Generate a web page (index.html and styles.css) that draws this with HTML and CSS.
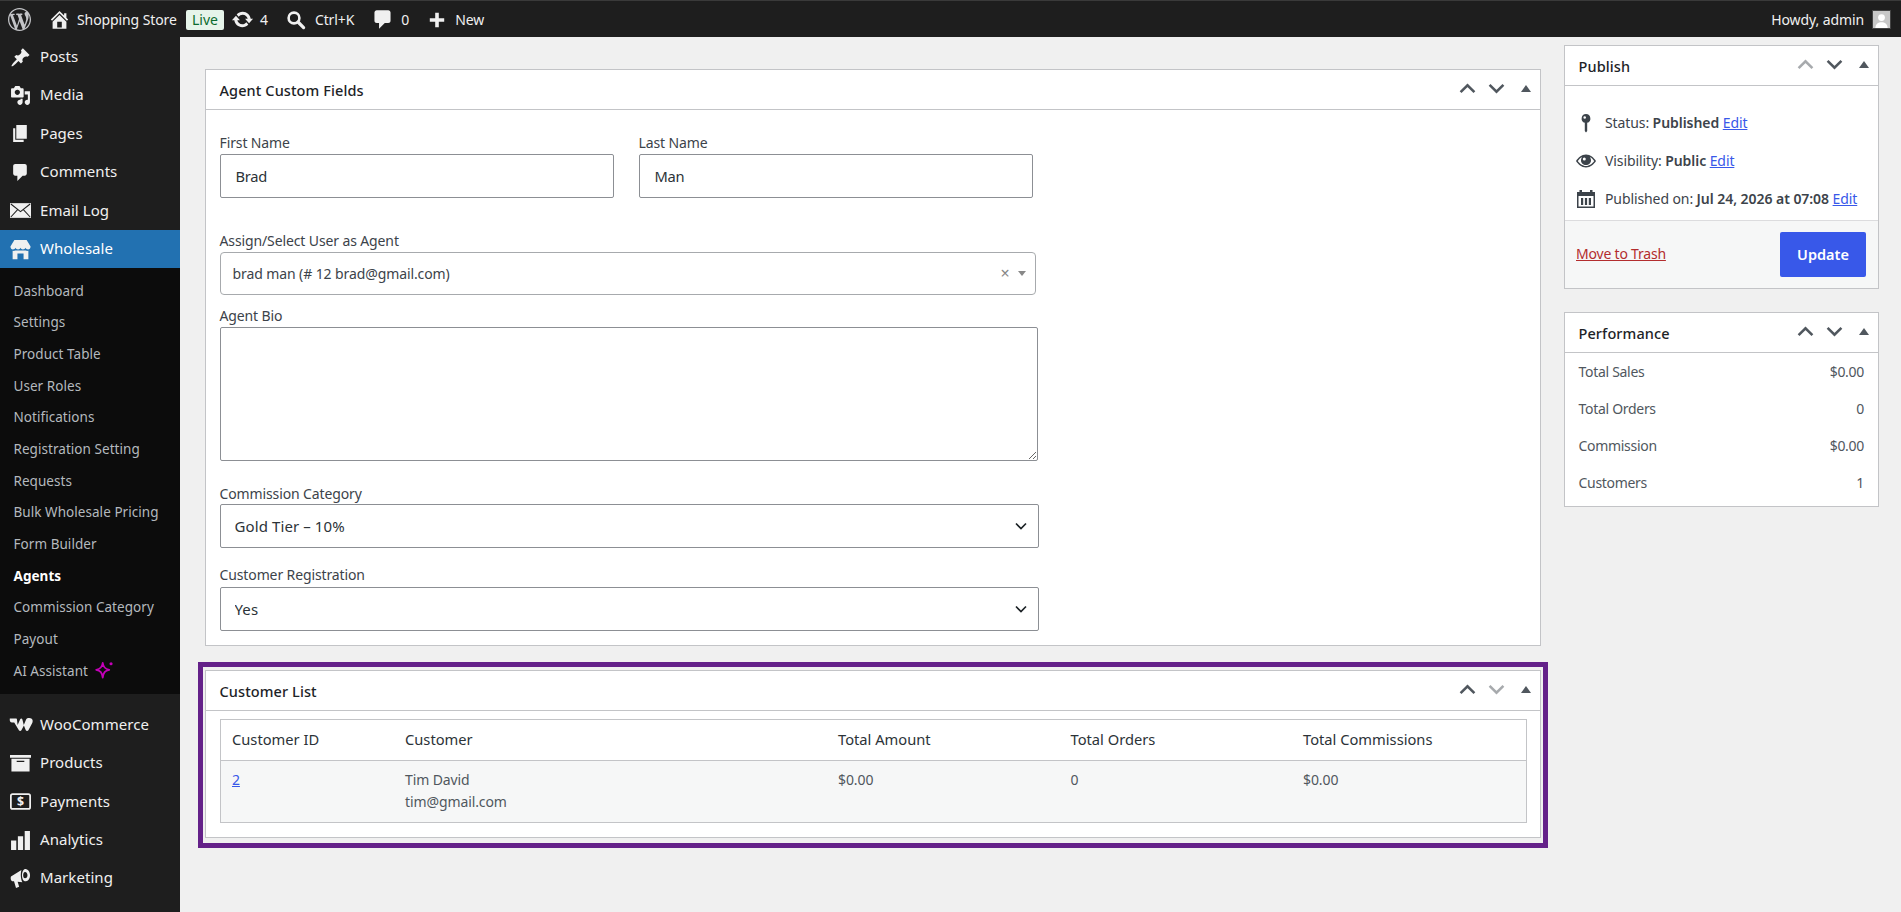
FILE: index.html
```html
<!DOCTYPE html>
<html lang="en">
<head>
    <meta charset="UTF-8">
    <title>Edit Agent - Shopping Store</title>
    <link rel="stylesheet" href="styles.css">
</head>
<body>

<!-- Admin bar -->
<header class="adminbar">
    <svg class="bar-logo" viewBox="0 0 20 20"><path d="M20 10c0-5.51-4.49-10-10-10C4.48 0 0 4.49 0 10c0 5.52 4.48 10 10 10 5.51 0 10-4.48 10-10zM7.78 15.37L4.37 6.22c.55-.02 1.17-.08 1.17-.08.5-.06.44-1.13-.06-1.11 0 0-1.45.11-2.37.11-.18 0-.37 0-.58-.01C4.12 2.69 6.87 1.11 10 1.11c2.33 0 4.45.87 6.05 2.34-.68-.11-1.65.39-1.65 1.58 0 .74.45 1.36.9 2.1.35.61.55 1.36.55 2.46 0 1.49-1.4 5-1.4 5l-3.03-8.37c.54-.02.82-.17.82-.17.5-.05.44-1.25-.06-1.22 0 0-1.44.12-2.38.12-.87 0-2.33-.12-2.33-.12-.5-.03-.56 1.2-.06 1.22l.92.08 1.26 3.41zM17.41 10c.24-.64.74-1.87.43-4.25.7 1.29 1.05 2.71 1.05 4.25 0 3.29-1.73 6.24-4.4 7.78.97-2.59 1.94-5.2 2.92-7.78zM6.1 18.09C3.12 16.65 1.11 13.53 1.11 10c0-1.3.23-2.48.72-3.59C3.25 10.3 4.67 14.2 6.1 18.09zm4.03-6.63l2.58 6.98c-.86.29-1.76.45-2.71.45-.79 0-1.57-.11-2.29-.33.81-2.38 1.62-4.74 2.42-7.1z"/></svg>
    <svg class="bar-icon bar-home" viewBox="0 0 20 20"><path d="M16 8.5l1.53 1.53-1.06 1.06L10 4.62l-6.47 6.47-1.06-1.06L10 2.5l4 4v-2h2v4zm-6-2.46l6 5.99V18H4v-5.97zM12 17v-5H8v5h4z"/></svg>
    <span class="bar-text bar-site">Shopping Store</span>
    <span class="live-badge">Live</span>
    <svg class="bar-icon bar-update" viewBox="0 0 20 20"><path d="M10.2 3.28c3.53 0 6.43 2.61 6.92 6h2.08l-3.5 4-3.5-4h2.32c-.45-1.97-2.21-3.45-4.32-3.45-1.45 0-2.73.71-3.54 1.78L4.95 5.66C6.23 4.2 8.11 3.28 10.2 3.28zm-.4 13.44c-3.52 0-6.43-2.61-6.92-6H.8l3.5-4c1.17 1.33 2.33 2.67 3.5 4H5.48c.45 1.97 2.21 3.45 4.32 3.45 1.45 0 2.73-.71 3.54-1.78l1.71 1.95c-1.28 1.46-3.15 2.38-5.25 2.38z"/></svg>
    <span class="bar-text bar-count">4</span>
    <svg class="bar-icon bar-search" viewBox="0 0 20 20"><circle cx="8" cy="8" r="5.4" fill="none" stroke="currentColor" stroke-width="2.6"/><path d="M12 12l5.6 5.6" fill="none" stroke="currentColor" stroke-width="3.2" stroke-linecap="round"/></svg>
    <span class="bar-text bar-shortcut">Ctrl+K</span>
    <svg class="bar-icon bar-comment" viewBox="0 0 20 20"><path d="M5 2h10c1.1 0 2 .9 2 2v7c0 1.1-.9 2-2 2h-3l-5 5v-5H5c-1.1 0-2-.9-2-2V4c0-1.1.9-2 2-2z"/></svg>
    <span class="bar-text bar-count-zero">0</span>
    <svg class="bar-icon bar-plus" viewBox="0 0 20 20"><path d="M8 2h4v6h6v4h-6v6H8v-6H2V8h6z"/></svg>
    <span class="bar-text bar-new">New</span>
    <span class="bar-text bar-howdy">Howdy, admin</span>
    <span class="bar-avatar"><svg viewBox="0 0 18 18"><rect width="18" height="18" fill="#c8c8c8"/><circle cx="9" cy="7" r="3.6" fill="#fff"/><path d="M2.5 18c.4-4.5 3-6 6.5-6s6.1 1.5 6.500 6z" fill="#fff"/></svg></span>
</header>

<div class="layout">
    <!-- Side menu -->
    <nav class="sidemenu">
        <a class="menu-item"><svg viewBox="0 0 20 20"><path d="M10.44 3.02l1.82-1.82 6.36 6.35-1.83 1.82c-1.05-.68-2.48-.57-3.41.36l-.75.75c-.92.93-1.04 2.35-.35 3.41l-1.83 1.82-2.41-2.41-2.8 2.79c-.42.42-3.38 2.71-3.8 2.29s1.86-3.39 2.28-3.81l2.79-2.79L4.1 9.36l1.83-1.82c1.05.69 2.48.57 3.4-.36l.75-.75c.93-.92 1.05-2.35.36-3.41z"/></svg>Posts</a>
        <a class="menu-item"><svg viewBox="0 0 20 20"><path d="M13 11V4c0-.55-.45-1-1-1h-1.67L9 1H5L3.67 3H2c-.55 0-1 .45-1 1v7c0 .55.45 1 1 1h10c.55 0 1-.45 1-1zM7 4.5c1.38 0 2.5 1.12 2.5 2.5S8.38 9.5 7 9.5 4.5 8.38 4.5 7 5.62 4.5 7 4.5zM14 6h5v10.5c0 1.38-1.12 2.5-2.5 2.5S14 17.88 14 16.5s1.12-2.5 2.5-2.5c.17 0 .34.02.5.05V9h-3V6zm-4 8.05V13h2v3.5c0 1.38-1.12 2.5-2.5 2.5S7 17.88 7 16.5 8.12 14 9.5 14c.17 0 .34.02.5.05z"/></svg>Media</a>
        <a class="menu-item"><svg viewBox="0 0 20 20"><path d="M6 15V2h10v13H6zm-1 1h8v2H3V5h2v11z"/></svg>Pages</a>
        <a class="menu-item"><svg viewBox="0 0 20 20"><path d="M5 2h9c1.1 0 2 .9 2 2v7c0 1.1-.9 2-2 2h-2l-5 5v-5H5c-1.1 0-2-.9-2-2V4c0-1.1.9-2 2-2z"/></svg>Comments</a>
        <a class="menu-item"><svg viewBox="0 0 20 20"><rect y="3" width="20" height="14"/><path class="mail-lines" d="M.8 3.8L10 11l9.2-7.2M.8 16.2L7.5 9M19.2 16.2L12.5 9"/></svg>Email Log</a>
        <a class="menu-item menu-current"><svg viewBox="0 0 24 24"><path d="M5 1h14l4.5 7.5c0 2-1.3 3.5-2.9 3.5-1.3 0-2.4-.8-2.9-2-.5 1.2-1.6 2-2.9 2s-2.3-.8-2.8-2c-.5 1.2-1.5 2-2.8 2s-2.4-.8-2.9-2c-.5 1.2-1.6 2-2.9 2C1.8 12 .5 10.5.5 8.5z"/><path d="M3 13.5c1 .3 2.2.2 3-.3h12c.8.5 2 .6 3 .3V23h-5.5v-6.5h-7V23H3z"/></svg>Wholesale</a>
        <div class="submenu">
            <a class="sub-item">Dashboard</a>
            <a class="sub-item">Settings</a>
            <a class="sub-item">Product Table</a>
            <a class="sub-item">User Roles</a>
            <a class="sub-item">Notifications</a>
            <a class="sub-item">Registration Setting</a>
            <a class="sub-item">Requests</a>
            <a class="sub-item">Bulk Wholesale Pricing</a>
            <a class="sub-item">Form Builder</a>
            <a class="sub-item sub-current">Agents</a>
            <a class="sub-item">Commission Category</a>
            <a class="sub-item">Payout</a>
            <a class="sub-item">AI Assistant <svg class="sparkle" viewBox="0 0 16 16"><path d="M6.5 1.5c.6 3.7 1.8 5.200 5.500 5.900-3.700.7-4.900 2.300-5.500 6.600-.6-4.300-1.800-5.900-5.500-6.600 3.700-.7 4.900-2.200 5.500-5.900z" fill="none" stroke="#c400b8" stroke-width="1.5" stroke-linejoin="round"/><circle cx="13.5" cy="2.3" r="1.3" fill="#c400b8"/></svg></a>
        </div>
        <div class="menu-sep"></div>
        <a class="menu-item"><svg class="woo-icon" viewBox="0 0 24 14"><path d="M.8 1h6c.8 0 1.2.5 1.2 1.2l.6 5.300 2.600-5.700c.4-1 1.800-1 2.100 0l1.500 5.700 2.300-5.500C17.700.8 18.800.4 20.200.4c2 0 3.500 1.200 3.500 3 0 1.100-.5 2.200-1.100 3.300l-3.200 6c-.6 1-2.100 1-2.600 0l-1.900-4.800-2.500 4.800c-.5 1-2 1-2.500 0L5.200 5H3C1.400 5 .4 3.400.8 1z"/></svg>WooCommerce</a>
        <a class="menu-item"><svg viewBox="0 0 22 18"><path fill-rule="evenodd" d="M0 0h22v3H0zM1.500 4h19v13.500h-19zM7 6v1.400h8V6z"/></svg>Products</a>
        <a class="menu-item"><svg viewBox="0 0 24 20"><rect x="1" y="1.5" width="22" height="17" rx="2" fill="none" stroke="currentColor" stroke-width="2"/><text x="12" y="15" text-anchor="middle" class="pay-sign">$</text></svg>Payments</a>
        <a class="menu-item"><svg viewBox="0 0 20 20"><path d="M1 10h5v9H1zM7.5 6h5v13h-5zM14 1h5v18h-5z"/></svg>Analytics</a>
        <a class="menu-item"><svg viewBox="0 0 22 22"><path fill-rule="evenodd" d="M1 9l11-7c-1 3-1 9 1 13l-5-.7 1.600 5.400-3.300 1.300L4.200 14 2.300 14C.8 13.500.3 10.500 1 9zM15.500 1c3.300 0 5.500 2.800 5.500 6.500S18.800 14 15.500 14c-1.500-.5-3-3-3-6.500S14 1.500 15.500 1zM15.800 4.300c-1.400 0-2 1.500-2 3.200s.6 3.200 2 3.200 2.500-1.500 2.500-3.200-1.100-3.200-2.500-3.200z"/></svg>Marketing</a>
    </nav>

    <main class="content">
        <div class="main-col">
            <section class="postbox box-agent">
                <div class="box-head">
                    <h2>Agent Custom Fields</h2>
                    <div class="box-tools">
                        <svg class="chev" viewBox="0 0 16 10"><path d="M1.5 8.5L8 2l6.5 6.5"/></svg>
                        <svg class="chev" viewBox="0 0 16 10"><path d="M1.5 1.5L8 8l6.5-6.5"/></svg>
                        <span class="tri"></span>
                    </div>
                </div>
                <div class="form-body">
                    <div class="name-row">
                        <div class="name-field">
                            <label class="field-label">First Name</label>
                            <input class="text-input" type="text" value="Brad">
                        </div>
                        <div class="name-field">
                            <label class="field-label">Last Name</label>
                            <input class="text-input" type="text" value="Man">
                        </div>
                    </div>
                    <label class="field-label label-assign">Assign/Select User as Agent</label>
                    <div class="select2">
                        <span>brad man (# 12 brad@gmail.com)</span>
                        <span class="select2-clear">×</span>
                        <span class="select2-arrow"></span>
                    </div>
                    <label class="field-label label-bio">Agent Bio</label>
                    <textarea class="bio-input"></textarea>
                    <label class="field-label label-commission">Commission Category</label>
                    <select class="select-input"><option>Gold Tier – 10%</option></select>
                    <label class="field-label label-registration">Customer Registration</label>
                    <select class="select-input"><option>Yes</option></select>
                </div>
            </section>

            <div class="highlight">
                <section class="postbox">
                    <div class="box-head">
                        <h2>Customer List</h2>
                        <div class="box-tools">
                            <svg class="chev" viewBox="0 0 16 10"><path d="M1.5 8.5L8 2l6.5 6.5"/></svg>
                            <svg class="chev chev-off" viewBox="0 0 16 10"><path d="M1.5 1.5L8 8l6.5-6.5"/></svg>
                            <span class="tri"></span>
                        </div>
                    </div>
                    <div class="table-wrap">
                        <table class="customer-table">
                            <thead>
                                <tr>
                                    <th class="col-id">Customer ID</th>
                                    <th class="col-name">Customer</th>
                                    <th class="col-amount">Total Amount</th>
                                    <th class="col-orders">Total Orders</th>
                                    <th>Total Commissions</th>
                                </tr>
                            </thead>
                            <tbody>
                                <tr>
                                    <td><a href="#">2</a></td>
                                    <td>Tim David<br>tim@gmail.com</td>
                                    <td>$0.00</td>
                                    <td>0</td>
                                    <td>$0.00</td>
                                </tr>
                            </tbody>
                        </table>
                    </div>
                </section>
            </div>
        </div>

        <aside class="side-col">
            <section class="postbox">
                <div class="box-head">
                    <h2>Publish</h2>
                    <div class="box-tools">
                        <svg class="chev chev-off" viewBox="0 0 16 10"><path d="M1.5 8.5L8 2l6.5 6.5"/></svg>
                        <svg class="chev" viewBox="0 0 16 10"><path d="M1.5 1.5L8 8l6.5-6.5"/></svg>
                        <span class="tri"></span>
                    </div>
                </div>
                <div class="publish-body">
                    <div class="publish-row">
                        <svg class="pub-icon" viewBox="0 0 20 20"><path fill-rule="evenodd" d="M10 1a4.500 4.500 0 0 1 1.200 8.800V18l-1.200 1.500L8.800 18V9.800A4.500 4.500 0 0 1 10 1zM8.700 3.200a1.300 1.300 0 1 0 0 2.600 1.300 1.300 0 0 0 0-2.600z"/></svg>
                        <span>Status: <b>Published</b> <a href="#">Edit</a></span>
                    </div>
                    <div class="publish-row">
                        <svg class="pub-icon" viewBox="0 0 20 20"><path fill-rule="evenodd" d="M10 3.500c4.400 0 8 3.300 10 6.500-2 3.200-5.600 6.500-10 6.500S2 13.200 0 10c2-3.200 5.600-6.500 10-6.500zM1.800 10c1.700 2.500 4.800 5 8.200 5s6.500-2.500 8.200-5c-1-1.500-2.500-3-4.300-4 .7.900 1.100 2.300 1.100 3.500 0 2.700-2.200 4.500-5 4.500s-5-1.800-5-4.500c0-1.200.4-2.600 1.100-3.500-1.800 1-3.300 2.500-4.300 4zM8.300 6.500a1.500 1.500 0 1 0 0 3 1.500 1.500 0 0 0 0-3z"/></svg>
                        <span>Visibility: <b>Public</b> <a href="#">Edit</a></span>
                    </div>
                    <div class="publish-row">
                        <svg class="pub-icon" viewBox="0 0 20 20"><path fill-rule="evenodd" d="M1 3h2.500V1h2.500v2h8V1h2.500v2H19v16H1zM2.500 7v10.500h15V7zM5 9h2.200v7H5zM8.900 9h2.200v7H8.900zM12.800 9H15v7h-2.200z"/></svg>
                        <span>Published on: <b>Jul 24, 2026 at 07:08</b> <a href="#">Edit</a></span>
                    </div>
                </div>
                <div class="publish-foot">
                    <a class="trash-link" href="#">Move to Trash</a>
                    <button class="update-btn">Update</button>
                </div>
            </section>

            <section class="postbox box-perf">
                <div class="box-head">
                    <h2>Performance</h2>
                    <div class="box-tools">
                        <svg class="chev" viewBox="0 0 16 10"><path d="M1.5 8.5L8 2l6.5 6.5"/></svg>
                        <svg class="chev" viewBox="0 0 16 10"><path d="M1.5 1.5L8 8l6.5-6.5"/></svg>
                        <span class="tri"></span>
                    </div>
                </div>
                <div class="perf-body">
                    <div class="perf-row"><span>Total Sales</span><span>$0.00</span></div>
                    <div class="perf-row"><span>Total Orders</span><span>0</span></div>
                    <div class="perf-row"><span>Commission</span><span>$0.00</span></div>
                    <div class="perf-row"><span>Customers</span><span>1</span></div>
                </div>
            </section>
        </aside>
    </main>
</div>

</body>
</html>
```

FILE: styles.css
```css
* {
    box-sizing: border-box;
}
html, body {
    margin: 0;
    height: 912px;
    overflow: hidden;
}
body {
    font-family: "Noto Sans", "Open Sans", sans-serif;
    font-size: 14px;
    color: #3c434a;
    background-color: #f0f0f0;
}
a {
    color: #3858e9;
}

/* admin bar */
.adminbar {
    display: flex;
    align-items: center;
    height: 37px;
    padding: 1px 10px 0 8px;
    border-top: 1px solid #3a3a3a;
    background-color: #1e1e1e;
    color: #f0f0f0;
}
.bar-logo {
    width: 23px;
    height: 23px;
    fill: #c3c4c7;
}
.bar-icon {
    width: 23px;
    height: 23px;
    flex: none;
    fill: #f0f0f0;
    color: #f0f0f0;
}
.bar-text {
    font-size: 14px;
    letter-spacing: -0.1px;
    white-space: nowrap;
}
.bar-home {
    margin-left: 17px;
}
.bar-site {
    margin-left: 6px;
    width: 101px;
}
.live-badge {
    margin-left: 8px;
    width: 38px;
    height: 20px;
    line-height: 20px;
    text-align: center;
    border-radius: 2px;
    background-color: #e6f4ea;
    color: #0b6b2e;
    font-size: 14px;
}
.bar-update {
    margin-left: 7px;
}
.bar-count {
    margin-left: 6px;
}
.bar-search {
    margin-left: 18px;
    width: 20px;
    height: 20px;
}
.bar-shortcut {
    margin-left: 9px;
}
.bar-comment {
    margin-left: 17px;
}
.bar-count-zero {
    margin-left: 7px;
}
.bar-plus {
    margin-left: 19px;
    width: 18px;
    height: 18px;
}
.bar-new {
    margin-left: 9px;
}
.bar-howdy {
    margin-left: auto;
}
.bar-avatar {
    margin-left: 8px;
    width: 19px;
    height: 19px;
    border: 1px solid #444;
    display: flex;
}
.bar-avatar svg {
    width: 100%;
    height: 100%;
}

.layout {
    display: flex;
    height: 875px;
}

/* side menu */
.sidemenu {
    width: 180px;
    flex: none;
    padding-top: 0.6px;
    background-color: #1e1e1e;
    color: #f0f0f0;
}
.menu-item {
    display: flex;
    align-items: center;
    height: 38.4px;
    padding-left: 40px;
    padding-bottom: 1.5px;
    position: relative;
    font-size: 15px;
    letter-spacing: 0.05px;
    color: #f0f0f0;
}
.menu-item svg {
    position: absolute;
    left: 10px;
    top: 9px;
    width: 21px;
    height: 21px;
    fill: #f0f0f0;
    color: #f0f0f0;
}
.menu-item .woo-icon {
    left: 9px;
    width: 24px;
}
.mail-lines {
    fill: none;
    stroke: #1e1e1e;
    stroke-width: 1;
}
.menu-current {
    background-color: #2271b1;
    color: #fff;
}
.submenu {
    height: 426px;
    padding-top: 7px;
    background-color: #0c0c0c;
}
.sub-item {
    display: flex;
    align-items: center;
    gap: 7px;
    height: 31.67px;
    padding-left: 13.5px;
    font-size: 13.5px;
    letter-spacing: 0.05px;
    color: #b4b9be;
}
.sub-current {
    color: #fff;
    font-weight: 700;
}
.sparkle {
    width: 19px;
    height: 19px;
}
.pay-sign {
    font-size: 14px;
    font-weight: 700;
    fill: #f0f0f0;
}
.menu-sep {
    height: 11.5px;
}

/* content */
.content {
    display: flex;
    flex: 1;
    gap: 23px;
    padding-left: 25px;
}
.main-col {
    width: 1336px;
    flex: none;
}
.side-col {
    width: 315px;
    flex: none;
    padding-top: 8px;
}
.postbox {
    border: 1px solid #c3c4c7;
    background-color: #fff;
}
.box-agent {
    margin-top: 32px;
    height: 577px;
}
.box-perf {
    margin-top: 23px;
}
.box-head {
    display: flex;
    align-items: center;
    justify-content: space-between;
    height: 40px;
    padding: 0 9px 0 13.5px;
    border-bottom: 1px solid #c3c4c7;
}
.box-head h2 {
    margin: 0;
    font-size: 14.5px;
    font-weight: 500;
    letter-spacing: 0.1px;
    color: #1d2327;
}
.box-tools {
    display: flex;
    align-items: center;
    gap: 12px;
    padding-bottom: 2px;
}
.chev {
    width: 17px;
    height: 11px;
    fill: none;
    stroke: #50575e;
    stroke-width: 2.4;
}
.chev-off {
    stroke: #a7aaad;
}
.tri {
    width: 0;
    height: 0;
    margin-left: 4px;
    border-left: 5px solid transparent;
    border-right: 5px solid transparent;
    border-bottom: 7px solid #50575e;
}

/* form */
.form-body {
    padding: 23px 14px 0 13.5px;
}
.name-row {
    display: flex;
    gap: 25px;
}
.name-field {
    width: 394px;
}
.field-label {
    display: block;
    height: 20px;
    line-height: 20px;
    font-size: 14px;
    letter-spacing: -0.12px;
    color: #3c434a;
}
.text-input, .select-input {
    display: block;
    width: 100%;
    height: 44px;
    margin-top: 1px;
    padding: 0 15px;
    border: 1px solid #8c8f94;
    border-radius: 2px;
    background-color: #fff;
    color: #2c3338;
    font-family: inherit;
    font-size: 14.7px;
    letter-spacing: -0.3px;
}
.select-input {
    width: 819px;
    margin-top: 0;
    padding: 0 14px;
    font-size: 15px;
    letter-spacing: 0.1px;
    appearance: none;
    background-image: url("data:image/svg+xml;utf8,<svg xmlns='http://www.w3.org/2000/svg' viewBox='0 0 12 8'><path d='M1 1.5l5 5 5-5' fill='none' stroke='%231d2327' stroke-width='1.7'/></svg>");
    background-repeat: no-repeat;
    background-position: right 11px center;
    background-size: 12px 8px;
}
.label-assign {
    margin-top: 32.5px;
}
.select2 {
    display: flex;
    align-items: center;
    width: 816px;
    height: 42.7px;
    margin-top: 1.5px;
    padding: 0 9px 0 12px;
    border: 1px solid #a7aaad;
    border-radius: 4px;
    font-size: 14px;
    letter-spacing: -0.1px;
    color: #3c434a;
}
.select2-clear {
    margin-left: auto;
    font-size: 16px;
    color: #888;
}
.select2-arrow {
    margin-left: 8px;
    border-left: 4px solid transparent;
    border-right: 4px solid transparent;
    border-top: 5px solid #888;
}
.label-bio {
    margin-top: 11.3px;
}
.bio-input {
    display: block;
    width: 818.5px;
    height: 134px;
    margin-top: 1px;
    border: 1px solid #8c8f94;
    border-radius: 2px;
}
.label-commission {
    margin-top: 23px;
}
.label-registration {
    margin-top: 17px;
    margin-bottom: 2px;
}

/* customer table */
.highlight {
    margin: 16px -7px 0 -7px;
    padding: 3px 2px 5px 2px;
    border: 5px solid #642189;
}
.table-wrap {
    padding: 8px 13px 14px 13.5px;
}
.customer-table {
    width: 100%;
    height: 104px;
    border: 1px solid #c3c4c7;
    border-collapse: collapse;
    font-size: 14px;
    letter-spacing: -0.1px;
}
.customer-table th {
    height: 41px;
    padding: 0 11.5px 2px;
    border-bottom: 1px solid #c3c4c7;
    text-align: left;
    font-size: 14.7px;
    letter-spacing: 0;
    font-weight: 400;
    color: #2c3338;
}
.customer-table td {
    padding: 8px 11.5px 0;
    vertical-align: top;
    line-height: 22px;
    background-color: #f6f7f7;
    color: #50575e;
}
.col-id {
    width: 173.5px;
}
.col-name {
    width: 433px;
}
.col-amount {
    width: 232.5px;
}
.col-orders {
    width: 232.5px;
}

/* publish box */
.publish-body {
    padding-top: 17.5px;
    height: 134px;
}
.publish-row {
    display: flex;
    align-items: center;
    gap: 9px;
    height: 38.2px;
    padding-left: 11px;
    font-size: 14px;
    letter-spacing: -0.1px;
    white-space: nowrap;
    color: #3c434a;
}
.publish-row b {
    font-weight: 600;
    letter-spacing: -0.05px;
}
.pub-icon {
    width: 20px;
    height: 20px;
    flex: none;
    fill: #3c434a;
}
.publish-foot {
    display: flex;
    align-items: center;
    justify-content: space-between;
    height: 68px;
    padding: 0 12px 0 11px;
    border-top: 1px solid #dcdcde;
    background-color: #f6f7f7;
}
.trash-link {
    margin-bottom: 2px;
    color: #b32d2e;
    font-size: 14px;
    letter-spacing: -0.2px;
}
.update-btn {
    width: 86px;
    height: 45px;
    padding-bottom: 3px;
    border: 0;
    border-radius: 2px;
    background-color: #3858e9;
    color: #fff;
    font-family: inherit;
    font-size: 14.5px;
    font-weight: 600;
}

/* performance box */
.perf-body {
    padding-bottom: 5px;
}
.perf-row {
    display: flex;
    align-items: center;
    justify-content: space-between;
    height: 37px;
    padding: 0 14px 0 13.5px;
    font-size: 14px;
    letter-spacing: -0.3px;
    color: #50575e;
}
```
